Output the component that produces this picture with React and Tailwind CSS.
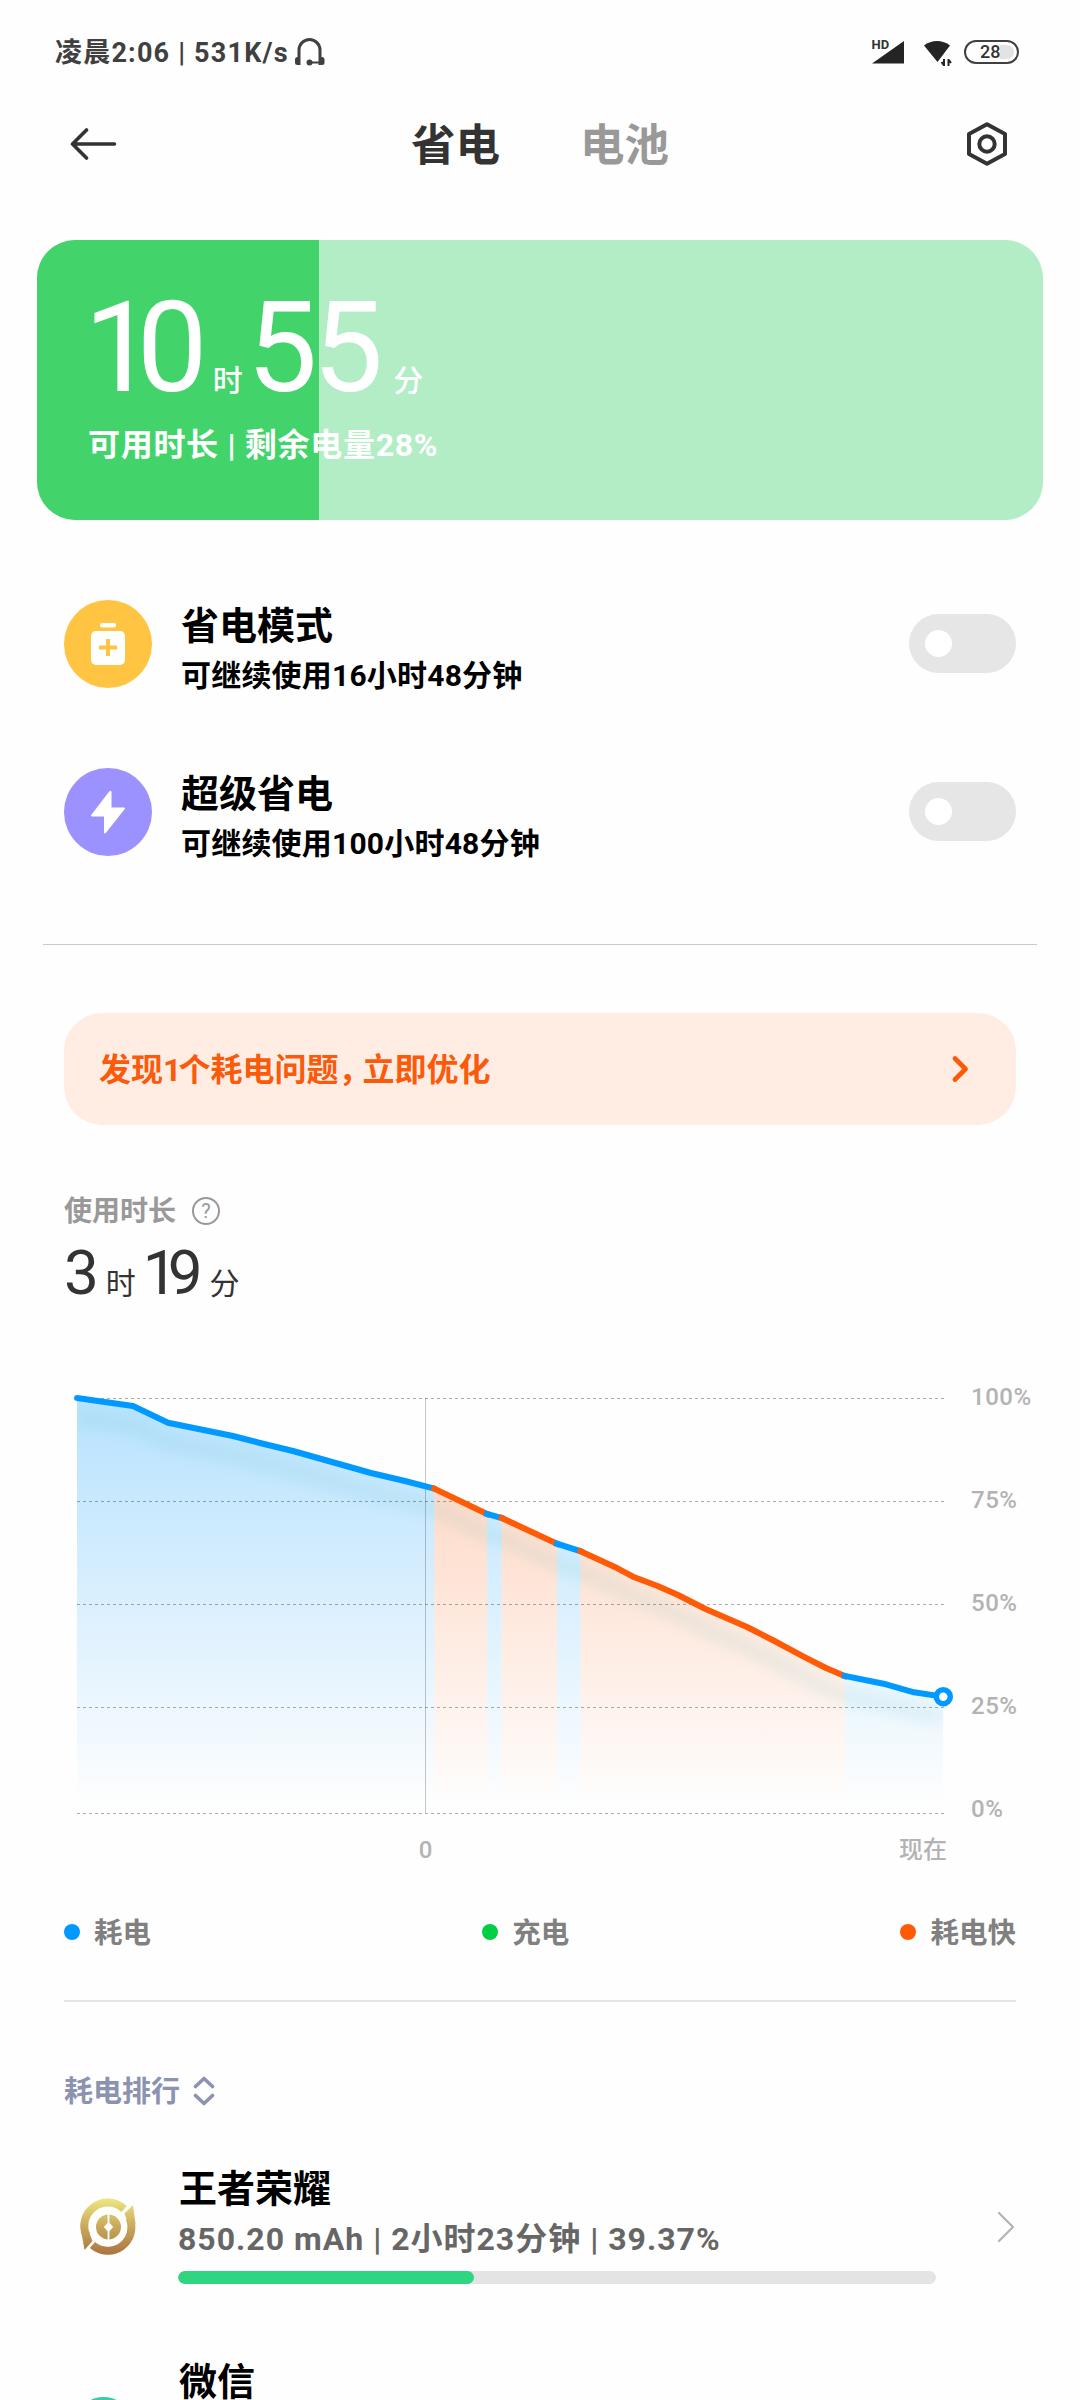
import React from 'react'

const FONT = "font-['Roboto','Noto_Sans_CJK_SC',sans-serif]"

const BLUE = '#0099ff'
const ORANGE = '#ff5a05'

// battery level over time, one entry for each coloured stretch of the line
const SEGMENTS = [
  {
    color: BLUE,
    points: [[77, 1398], [133, 1406], [168, 1422.7], [233, 1436], [260, 1443], [293, 1451], [371, 1473], [405, 1481], [434.3, 1488.7]],
  },
  { color: ORANGE, points: [[434.3, 1488.7], [487, 1514]] },
  { color: BLUE, points: [[487, 1514], [501.8, 1518]] },
  { color: ORANGE, points: [[501.8, 1518], [557, 1543.7]] },
  { color: BLUE, points: [[557, 1543.7], [580.5, 1551.3]] },
  {
    color: ORANGE,
    points: [[580.5, 1551.3], [617.5, 1568.3], [633, 1576.7], [657, 1585.7], [678, 1595], [705, 1608.7], [747, 1627], [774, 1640.7], [805, 1657.3], [826, 1668], [844.8, 1676]],
  },
  { color: BLUE, points: [[844.8, 1676], [886, 1684.3], [914, 1692.3], [943.2, 1696.7]] },
]

const GRID = [
  { label: '100%', y: 1398.5, ty: 1405 },
  { label: '75%', y: 1501.5, ty: 1508 },
  { label: '50%', y: 1604.5, ty: 1611 },
  { label: '25%', y: 1707.5, ty: 1714 },
  { label: '0%', y: 1813.5, ty: 1817 },
]

const LEGEND = [
  { label: '耗电', dot: 'bg-[#0099ff]' },
  { label: '充电', dot: 'bg-[#00cf46]' },
  { label: '耗电快', dot: 'bg-[#ff5a05]' },
]

const toPath = (points) => points.map(([x, y]) => `${x},${y}`).join(' ')

const StatusBar = () => (
  <div className="flex h-[104px] items-center justify-between pr-[61px] pl-[55px]">
    <div className="flex items-center text-[#404040]">
      <span className="pt-0.5 text-[27px] leading-9 font-bold tracking-[1.2px] whitespace-pre">凌晨2:06 | 531K/s</span>
      <svg className="ml-[5px] h-[30px] w-8" viewBox="0 0 32 30" fill="none">
        <path d="M5 28V13a10.5 10.5 0 0 1 21 0v15" stroke="#404040" strokeWidth="3" />
        <rect x="1" y="20" width="5" height="8" rx="2.5" fill="#404040" />
        <rect x="25.5" y="20" width="5" height="8" rx="2.5" fill="#404040" />
        <path d="M15 25.5h11" stroke="#404040" strokeWidth="2" />
        <circle cx="15.5" cy="25.5" r="3" fill="#404040" />
      </svg>
    </div>
    <div className="flex items-center">
      <svg className="h-[30px] w-8" viewBox="0 0 32 30">
        <path d="M0 26.5 32 4v22.5z" fill="#242424" />
        <path d="M0 0h20v10l-6 5H0z" fill="#fefefe" />
        <text x="-0.5" y="11.5" fontSize="13" fontWeight="700" fill="#333">HD</text>
      </svg>
      <svg className="ml-5 h-[30px] w-7" viewBox="0 0 28 30">
        <path d="M0 8.5C7 2.5 19 2.5 26 8.5L13.5 25z" fill="#242424" />
        <path d="M16.5 24.5 21 20l7 2v7H16.5z" fill="#fefefe" />
        <path d="M20 22v7M20 28.5l-2.5-3.5M24.5 29V22M24.5 22.5l2.5 3.5" stroke="#242424" strokeWidth="2" />
      </svg>
      <div className="ml-[12px] flex h-6 w-[55px] items-center rounded-full border-2 border-[#404040] pl-[14px]">
        <span className="text-[18px] leading-5 font-medium text-[#333]">28</span>
        <span className="h-[14px] w-[14px] rounded-r-full bg-[#e3e3e3]" />
      </div>
    </div>
  </div>
)

const Header = () => (
  <div className="flex h-20 items-center pr-[73px] pl-[70px]">
    <svg className="h-8 w-[47px]" viewBox="0 0 47 32" fill="none" stroke="#333" strokeWidth="3.6" strokeLinecap="round" strokeLinejoin="round">
      <path d="M16.5 2 2.5 16l14 14M2.5 16H44.5" />
    </svg>
    <div className="ml-[294px] flex gap-[80px] pt-[3px] text-[44.5px] leading-[60px] font-bold">
      <span className="text-[#333]">省电</span>
      <span className="text-[#999]">电池</span>
    </div>
    <svg className="ml-auto h-11 w-10" viewBox="0 0 40 44" fill="none" stroke="#333" strokeWidth="4">
      <path d="M20 2.2 38 12v20L20 41.8 2 32V12z" strokeLinejoin="round" />
      <circle cx="20" cy="22" r="7.7" />
    </svg>
  </div>
)

const BatteryCard = () => (
  <div className="relative mx-[37px] mt-14 h-[280px] overflow-hidden rounded-[38px] bg-[#b3edc5]">
    <div className="absolute inset-y-0 left-0 w-[28%] bg-[#42d46a]" />
    <div className="relative pt-[43px] pl-[47px] text-white">
      <div className="flex h-[130px] items-baseline leading-[130px]">
        <span className="text-[126px] tracking-[-18px]">10</span>
        <span className="ml-[23px] text-[30px] font-medium">时</span>
        <span className="ml-[4px] text-[126px] tracking-[-5px]">55</span>
        <span className="ml-[15px] text-[30px] font-medium">分</span>
      </div>
      <div className="mt-[12px] ml-[4px] text-[32px] leading-10 font-bold tracking-[0.7px] whitespace-pre">可用时长 | 剩余电量28%</div>
    </div>
  </div>
)

const Switch = () => (
  <div className="mb-px flex h-[59px] w-[107px] items-center rounded-full bg-[#e6e6e6] pl-4">
    <div className="h-[27px] w-[27px] rounded-full bg-white" />
  </div>
)

const ModeRow = ({ icon, color, title, desc }) => (
  <div className="mt-20 flex h-[88px] items-center px-16">
    <div className={`flex h-[88px] w-[88px] shrink-0 items-center justify-center rounded-full ${color}`}>{icon}</div>
    <div className="mt-[9px] ml-[29px] flex-1 text-black">
      <div className="text-[38px] leading-[50px] font-bold">{title}</div>
      <div className="mt-[5px] text-[30px] leading-10 font-bold tracking-[0.2px]">{desc}</div>
    </div>
    <Switch />
  </div>
)

const PowerSaveIcon = () => (
  <svg className="h-11 w-9" viewBox="0 0 36 44">
    <rect x="10" y="1" width="16" height="4.5" rx="2" fill="#fff" />
    <rect x="1" y="9" width="34" height="34" rx="5" fill="#fff" />
    <path d="M18 17v17M9 25.5h18" stroke="#ffc542" strokeWidth="4" />
  </svg>
)

const BoltIcon = () => (
  <svg className="h-11 w-9" viewBox="0 0 36 44">
    <path d="M20 2 2 25.5h13V42.5L34 18.5H20.5V2z" fill="#fff" stroke="#fff" strokeWidth="2" strokeLinejoin="round" />
  </svg>
)

const Banner = () => (
  <div className="mx-16 mt-[68px] flex h-28 items-center justify-between rounded-[38px] bg-[#ffede4] pr-[46px] pl-[35px]">
    <span className="pt-0.5 text-[32px] leading-10 font-bold text-[#fa5a0a]">
      发现<span className="tracking-[-3px]">1</span>个耗电问题<span className="tracking-[-8px]">，</span>立即优化
    </span>
    <svg className="h-7 w-[19px]" viewBox="0 0 19 28" fill="none">
      <path d="M4 3.5 14.5 14 4 24.5" stroke="#fa5a0a" strokeWidth="4.8" strokeLinecap="round" strokeLinejoin="round" />
    </svg>
  </div>
)

const Usage = () => (
  <div className="px-16">
    <div className="mt-[70px] flex h-8 items-center">
      <span className="pt-0.5 text-[28px] leading-8 font-bold text-[#999]">使用时长</span>
      <span className="ml-4 flex h-7 w-7 items-center justify-center rounded-full border-2 border-[#999] text-[20px] leading-none text-[#999]">
        ?
      </span>
    </div>
    <div className="mt-[14px] flex h-16 items-baseline leading-[64px] text-[#333]">
      <span className="text-[62px]">3</span>
      <span className="ml-[7px] text-[30px]">时</span>
      <span className="ml-[7px] text-[62px] tracking-[-10px]">19</span>
      <span className="ml-[17px] text-[30px]">分</span>
    </div>
  </div>
)

const Chart = () => {
  const line = SEGMENTS.flatMap((s) => s.points)

  return (
    <svg className="mt-[65px] block h-[500px] w-[1080px]" viewBox="0 1370 1080 500" fill="none">
      <defs>
        <linearGradient id="blueFill" gradientUnits="userSpaceOnUse" x1="0" y1="1398" x2="0" y2="1808">
          <stop offset="0" stopColor={BLUE} stopOpacity="0.28" />
          <stop offset="1" stopColor={BLUE} stopOpacity="0" />
        </linearGradient>
        <linearGradient id="orangeFill" gradientUnits="userSpaceOnUse" x1="0" y1="1398" x2="0" y2="1808">
          <stop offset="0" stopColor={ORANGE} stopOpacity="0.28" />
          <stop offset="1" stopColor={ORANGE} stopOpacity="0" />
        </linearGradient>
        <filter id="soft" filterUnits="userSpaceOnUse" x="40" y="1370" width="960" height="440">
          <feGaussianBlur stdDeviation="6" />
        </filter>
        <clipPath id="area">
          <polygon points={`${toPath(line)} 943,1813 77,1813`} />
        </clipPath>
      </defs>

      {SEGMENTS.map(({ color, points }, i) => (
        <polygon
          key={i}
          points={`${toPath(points)} ${points[points.length - 1][0]},1813 ${points[0][0]},1813`}
          fill={color === BLUE ? 'url(#blueFill)' : 'url(#orangeFill)'}
        />
      ))}
      <g clipPath="url(#area)">
        <polyline points={toPath(line)} transform="translate(0 20)" stroke="#30b4b0" strokeOpacity="0.1" strokeWidth="14" filter="url(#soft)" />
      </g>

      {GRID.map(({ label, y, ty }) => (
        <g key={label}>
          <path d={`M77 ${y}H944`} stroke="#000" strokeOpacity="0.32" strokeDasharray="3 3" />
          <text x="971" y={ty} fontSize="24" fontWeight="500" letterSpacing="0.5" fill="#b3b3b3">{label}</text>
        </g>
      ))}
      <path d="M425.5 1398V1813" stroke="#000" strokeOpacity="0.22" />

      {SEGMENTS.map(({ color, points }, i) => (
        <polyline key={i} points={toPath(points)} stroke={color} strokeWidth="6" strokeLinejoin="round" strokeLinecap={i === 0 ? 'round' : 'square'} />
      ))}
      <circle cx="943.3" cy="1696.7" r="7" fill="#fff" stroke={BLUE} strokeWidth="5.5" />

      <text x="425.5" y="1858" fontSize="24" fontWeight="500" textAnchor="middle" fill="#b3b3b3">0</text>
      <text x="923" y="1858" fontSize="24" fontWeight="500" textAnchor="middle" fill="#b3b3b3">现在</text>
    </svg>
  )
}

const Legend = () => (
  <div className="mx-16 mt-[42px] flex h-10 items-center justify-between">
    {LEGEND.map(({ label, dot }) => (
      <div key={label} className="flex items-center gap-[14px]">
        <span className={`h-4 w-4 rounded-full ${dot}`} />
        <span className="pt-[3px] text-[28.5px] leading-10 font-bold text-[#808080]">{label}</span>
      </div>
    ))}
  </div>
)

const GameIcon = () => (
  <svg className="h-[88px] w-[88px]" viewBox="0 0 88 88" fill="none">
    <defs>
      <linearGradient id="gold" gradientUnits="userSpaceOnUse" x1="44" y1="16" x2="44" y2="72">
        <stop offset="0" stopColor="#ece681" />
        <stop offset="0.5" stopColor="#c9a75b" />
        <stop offset="1" stopColor="#aa7440" />
      </linearGradient>
    </defs>
    <path d="M60 26A23.5 23.5 0 0 0 22.5 53" stroke="url(#gold)" strokeWidth="8" />
    <path d="M28.5 62A23.5 23.5 0 0 0 65.5 35" stroke="url(#gold)" strokeWidth="8" />
    <path d="M17 47 20.5 67 28.5 58 24.5 48z" fill="url(#gold)" />
    <path d="M71.500 41 69 22 60.500 30.500 64 40z" fill="url(#gold)" />
    <circle cx="44.500" cy="44" r="12.5" fill="url(#gold)" />
    <path d="M44.500 29v30M44.500 40l3.500 4-3.500 4-3.500-4z" stroke="#fff" strokeWidth="1.8" fill="#fff" />
  </svg>
)

const WechatIcon = () => (
  <svg className="h-[88px] w-[88px]" viewBox="0 0 88 88">
    <ellipse cx="39.5" cy="38.5" rx="23" ry="17.5" fill="#35cfa4" />
  </svg>
)

const AppRow = ({ icon, name, detail, percent }) => (
  <div className="mb-[73px] flex h-[120px] pr-[65px] pl-16">
    <div className="mt-[19px] h-[88px] w-[88px] shrink-0">{icon}</div>
    <div className="ml-[26px] w-[758px]">
      <div className="h-[50px] pl-px text-[38px] leading-[50px] font-bold text-black">{name}</div>
      <div className="mt-[3px] h-11 text-[32px] leading-[44px] font-bold tracking-[1px] whitespace-pre text-[#666]">{detail}</div>
      <div className="mt-[10px] h-[13px] overflow-hidden rounded-full bg-[#e4e4e4]">
        <div className="h-full rounded-full bg-[#2fd67f]" style={{ width: `${percent}%` }} />
      </div>
    </div>
    <svg className="mt-[47px] ml-auto h-8 w-[18px]" viewBox="0 0 18 32" fill="none">
      <path d="M2 2l14 14L2 30" stroke="#b3b3b3" strokeWidth="2.2" strokeLinecap="round" strokeLinejoin="round" />
    </svg>
  </div>
)

const App = () => (
  <div className={`flex h-[2400px] w-[1080px] flex-col overflow-hidden bg-[#fefefe] *:shrink-0 ${FONT}`}>
    <StatusBar />
    <Header />
    <BatteryCard />
    <ModeRow icon={<PowerSaveIcon />} color="bg-[#ffc542]" title="省电模式" desc="可继续使用16小时48分钟" />
    <ModeRow icon={<BoltIcon />} color="bg-[#9c92ff]" title="超级省电" desc="可继续使用100小时48分钟" />
    <div className="mx-[43px] mt-[88px] h-px bg-[#cacaca]" />
    <Banner />
    <Usage />
    <Chart />
    <Legend />
    <div className="mx-16 mt-12 h-0.5 bg-[#e4e4e4]" />
    <div className="mt-[69px] mb-[53px] flex h-10 items-center px-16 text-[#8c93b0]">
      <span className="pt-0.5 text-[29px] leading-10 font-bold">耗电排行</span>
      <svg className="ml-[13px] h-[30px] w-[22px]" viewBox="0 0 22 30" fill="none" stroke="currentColor" strokeWidth="3.6" strokeLinecap="round" strokeLinejoin="round">
        <path d="M2.5 10.5 11 2.5l8.5 8M2.5 19.5l8.5 8 8.5-8" />
      </svg>
    </div>
    <AppRow icon={<GameIcon />} name="王者荣耀" detail="850.20 mAh | 2小时23分钟 | 39.37%" percent={39.1} />
    <AppRow icon={<WechatIcon />} name="微信" detail="" percent={0} />
  </div>
)

export default App
